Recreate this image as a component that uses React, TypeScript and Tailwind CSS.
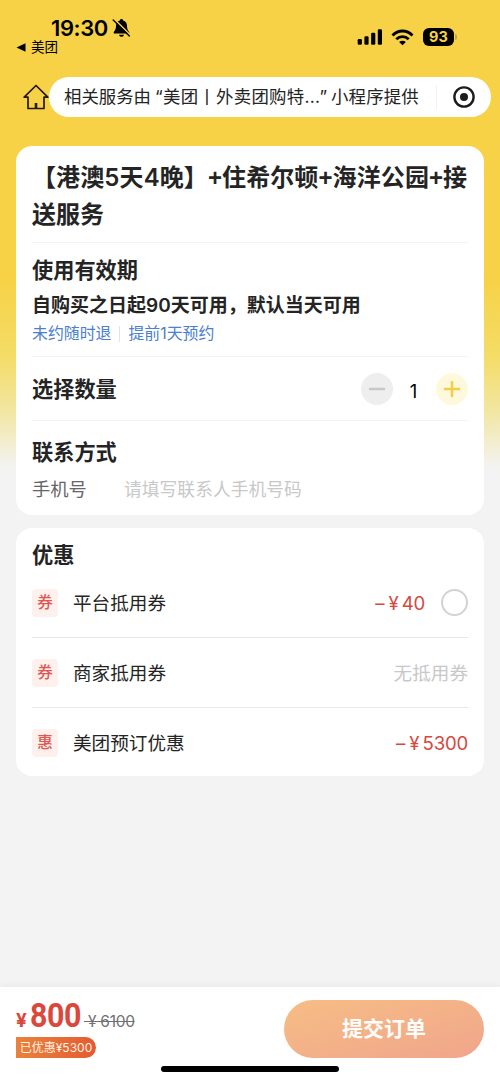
import React, { useState } from 'react';

type Discount = {
  id: string;
  tag: string;
  name: string;
  amount?: string;
  selectable?: boolean;
};

const DISCOUNTS: Discount[] = [
  { id: 'platform', tag: '券', name: '平台抵用券', amount: '40', selectable: true },
  { id: 'merchant', tag: '券', name: '商家抵用券' },
  { id: 'booking', tag: '惠', name: '美团预订优惠', amount: '5300' },
];

const StatusBar = () => (
  <div className="flex h-[66px] justify-between pr-[43px] pl-4 text-black">
    <div className="flex flex-col pt-[14px]">
      <div className="flex h-7 items-center pl-[35px]">
        <span className="w-[57px] text-[22px] font-semibold tracking-[-0.4px] whitespace-nowrap">19:30</span>
        <svg className="ml-1 h-5 w-[19px]" viewBox="0 0 19 20">
          <path
            d="M9.5 1C8.6 1 8 1.6 7.9 2.4C5.3 3.1 4 5.2 4 7.8C4 11.8 2.3 12.9 1.7 14.4C1.5 15.1 1.9 15.5 2.5 15.5H16.5C17.1 15.5 17.5 15.1 17.3 14.4C16.7 12.9 15 11.8 15 7.8C15 5.2 13.7 3.1 11.1 2.4C11 1.6 10.4 1 9.5 1Z"
            fill="currentColor"
          />
          <path d="M7 16.7H12C11.6 18.1 10.7 18.7 9.5 18.7C8.3 18.7 7.4 18.1 7 16.7Z" fill="currentColor" />
          <path d="M2.4 1.4L18.4 17" stroke="#f7d247" strokeWidth="1.6" />
          <path d="M1.2 2L17.4 18" stroke="currentColor" strokeWidth="1.4" strokeLinecap="round" />
        </svg>
      </div>
      <div className="flex h-[10px] items-center">
        <svg className="h-[9px] w-[10px]" viewBox="0 0 10 9">
          <path d="M0.5 4.5L9.5 0.3V8.7Z" fill="currentColor" />
        </svg>
        <span className="ml-[5px] text-[13.5px] leading-[10px]">美团</span>
      </div>
    </div>

    <div className="mt-[27px] flex h-5 items-center">
      <svg className="h-4 w-[26px]" viewBox="0 0 26 16" fill="currentColor">
        <rect x="0.7" y="10" width="4.2" height="5.8" rx="1.2" />
        <rect x="7.4" y="7.2" width="4.2" height="8.6" rx="1.2" />
        <rect x="14.1" y="3.8" width="4.2" height="12" rx="1.2" />
        <rect x="20.8" y="0.3" width="4.2" height="15.5" rx="1.2" />
      </svg>
      <svg className="ml-2 h-[17px] w-[23px]" viewBox="0 0 23 17" fill="none" stroke="currentColor" strokeWidth="2.9">
        <path d="M1.5 6.4C7.2 0.6 15.8 0.6 21.5 6.4" />
        <path d="M5.3 10.2C8.9 6.7 14.1 6.7 17.7 10.2" />
        <path d="M11.5 16.3L8.1 12.9C10 11.2 13 11.2 14.9 12.9Z" fill="currentColor" stroke="none" />
      </svg>
      <div className="ml-[9px] flex h-[18px] w-[31px] items-center justify-center rounded-[6px] bg-black text-[14.5px] font-bold text-[#f7d247]">
        93
      </div>
      <div className="ml-[1px] h-[6px] w-[2px] rounded-r-full bg-[#c0a743]" />
    </div>
  </div>
);

const TopBar = () => (
  <div className="mt-[11px] flex h-10 items-center pr-[9px] pl-[23px]">
    <svg className="h-[26px] w-[26px]" viewBox="0 0 26 26" fill="none" stroke="#241a05" strokeWidth="1.7" strokeLinejoin="round">
      <path d="M13 1.5L1.2 13.2H5V24.5H21V13.2H24.8Z" />
      <path d="M13 19V24.5" strokeWidth="2.6" />
    </svg>
    <div className="flex h-10 flex-1 items-center rounded-full bg-white pl-[15px] text-[#242424]">
      <div className="flex w-[356px] pt-px text-[17.4px] whitespace-nowrap">
        <span className="w-[91px]">相关服务由</span>
        <span className="w-[176px] tracking-[0.3px]">“美团丨外卖团购特...”</span>
        <span className="tracking-[0.2px]">小程序提供</span>
      </div>
      <div className="ml-4 h-6 w-px bg-[#f1f1f1]" />
      <svg className="ml-4 h-[22px] w-[22px]" viewBox="0 0 22 22">
        <circle cx="11" cy="11" r="9.6" fill="none" stroke="#1c1c1c" strokeWidth="2.4" />
        <circle cx="11" cy="11" r="4" fill="#1c1c1c" />
      </svg>
    </div>
  </div>
);

const QuantityStepper = () => {
  const [quantity, setQuantity] = useState(1);

  return (
    <div className="flex items-center">
      <button
        type="button"
        onClick={() => setQuantity((q) => Math.max(1, q - 1))}
        className="flex h-8 w-8 items-center justify-center rounded-full bg-[#eeeeee]"
      >
        <svg className="h-4 w-4" viewBox="0 0 16 16">
          <path d="M0.8 8H15.2" stroke="#c8c8c8" strokeWidth="2.6" strokeLinecap="round" />
        </svg>
      </button>
      <span className="w-[43px] pt-1.5 pr-0.5 text-center text-[18.5px] text-black">{quantity}</span>
      <button
        type="button"
        onClick={() => setQuantity((q) => q + 1)}
        className="flex h-8 w-8 items-center justify-center rounded-full bg-[#fef9dc]"
      >
        <svg className="h-4 w-4" viewBox="0 0 16 16">
          <path d="M0.8 8H15.2M8 0.8V15.2" stroke="#f3cd45" strokeWidth="2.5" strokeLinecap="round" />
        </svg>
      </button>
    </div>
  );
};

const Plus = () => <span className="font-['Liberation_Sans'] font-bold">+</span>;

const OrderCard = () => (
  <div className="mx-4 mt-[29px] h-[369px] rounded-[16px] bg-white px-4 pt-[13px] text-[#242424]">
    <h1 className="h-[83px] text-[24px] leading-[37px] font-bold whitespace-nowrap">
      <span className="block tracking-[0.1px]">
        【港澳<span className="font-semibold">5</span>天<span className="font-semibold">4</span>晚】
        <Plus />
        住希尔顿
        <Plus />
        海洋公园
        <Plus />接
      </span>
      <span className="block">送服务</span>
    </h1>

    <div className="h-[114px] border-t border-[#f3f3f3] pt-[10px]">
      <h2 className="text-[21.2px] leading-[34px] font-bold">使用有效期</h2>
      <p className="h-9 pt-px text-[19px] leading-9 font-bold whitespace-nowrap">
        自购买之日起<span className="font-semibold">90</span>天可用，默认当天可用
      </p>
      <div className="flex h-[21px] items-center text-[15.9px] text-[#4a80ce]">
        <span>未约随时退</span>
        <span className="mx-2 h-4 w-px bg-[#dfe3ea]" />
        <span>提前1天预约</span>
      </div>
    </div>

    <div className="flex h-16 items-center justify-between border-t border-[#f3f3f3]">
      <h2 className="pt-0.5 text-[21.2px] font-bold">选择数量</h2>
      <QuantityStepper />
    </div>

    <div className="border-t border-[#f3f3f3] pt-[14px]">
      <h2 className="text-[21.2px] leading-[34px] font-bold">联系方式</h2>
      <label className="flex h-[42px] items-center text-[18.3px] text-[#666666]">
        <span className="w-[92px]">手机号</span>
        <input
          className="flex-1 text-[17.8px] outline-none placeholder:text-[#c8c8c8]"
          placeholder="请填写联系人手机号码"
        />
      </label>
    </div>
  </div>
);

const DiscountRow = ({ item }: { item: Discount }) => (
  <div className="flex h-[70px] items-center border-b border-[#e8e8e8] text-[18.6px] last:border-b-0">
    <span className="flex h-7 w-[26px] items-center justify-center rounded-[4px] bg-[#fdf0ed] text-[15.5px] font-medium text-[#e15650]">
      {item.tag}
    </span>
    <span className="ml-[15px] flex-1 pt-0.5">{item.name}</span>
    {item.amount ? (
      <span className="flex pt-0.5 text-[#d5493f]">
        <span>–</span>
        <span className="mr-[3px] ml-1">¥</span>
        <span className="tracking-[-0.2px]">{item.amount}</span>
      </span>
    ) : (
      <span className="pt-0.5 text-[#c8c8c8]">无抵用券</span>
    )}
    {item.selectable && <span className="ml-4 h-[27px] w-[27px] rounded-full border-2 border-[#d2d2d2]" />}
  </div>
);

const DiscountCard = () => (
  <div className="mx-4 mt-[13px] h-[248px] rounded-[16px] bg-white px-4 pt-[9px] text-[#242424]">
    <h2 className="h-[31px] text-[21.2px] leading-[36px] font-bold">优惠</h2>
    <div>
      {DISCOUNTS.map((item) => (
        <DiscountRow key={item.id} item={item} />
      ))}
    </div>
  </div>
);

const SubmitBar = () => (
  <footer className="mt-auto flex h-24 flex-col bg-white shadow-[0_-2px_6px_rgba(0,0,0,0.04)]">
    <div className="flex h-[79px] justify-between px-4 pt-[13px]">
      <div className="flex flex-col items-start">
        <div className="flex h-[37px] items-baseline whitespace-nowrap text-[#dc473c]">
          <span className="w-[14px] text-[19px] leading-8 font-bold">¥</span>
          <span className="w-[54px] origin-left scale-x-[0.92] font-['Roboto'] text-[33px] leading-8 font-bold tracking-[-0.5px]">
            800
          </span>
          <span className="text-[15.5px] tracking-[-0.3px] text-[#707070] line-through">&nbsp;¥ 6100</span>
        </div>
        <span className="flex h-[21px] w-20 items-center justify-center rounded-r-full rounded-bl-[12px] bg-gradient-to-r from-[#e8823c] to-[#e55a31] text-[12px] whitespace-nowrap text-[#fff3e4]">
          已优惠¥5300
        </span>
      </div>
      <button
        type="button"
        className="h-[58px] w-[200px] rounded-full bg-gradient-to-br from-[#f6bd85] to-[#f0a58b] text-[21px] font-bold text-white"
      >
        提交订单
      </button>
    </div>
    <div className="mx-auto h-[6px] w-[178px] rounded-full bg-black" />
  </footer>
);

export default function App() {
  return (
    <div className="flex h-[1083px] w-[500px] flex-col overflow-hidden bg-[#f3f3f3] bg-[linear-gradient(to_bottom,#f7d247_0px,#f7d247_280px,#f4dc66_355px,#f2e6a0_410px,#f3f3f3_468px)] font-['Inter','Noto_Sans_CJK_SC',sans-serif]">
      <StatusBar />
      <TopBar />
      <OrderCard />
      <DiscountCard />
      <SubmitBar />
    </div>
  );
}
